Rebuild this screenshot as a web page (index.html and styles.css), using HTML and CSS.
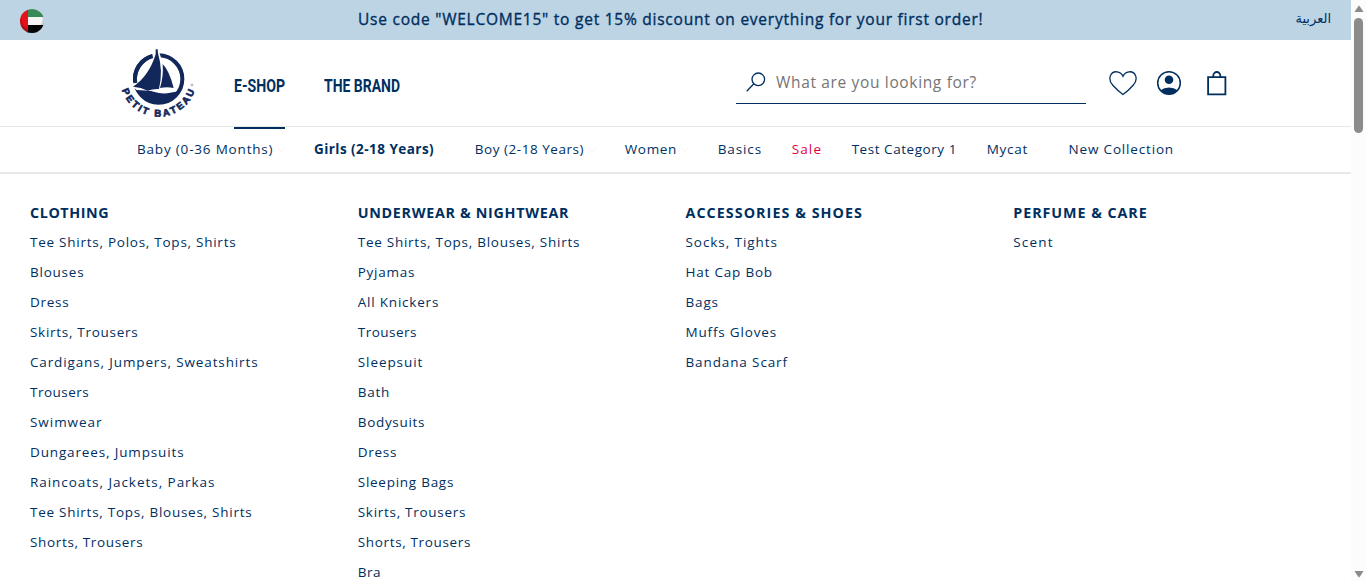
FILE: index.html
```html
<!DOCTYPE html>
<html lang="en">
<head>
<meta charset="utf-8">
<title>Petit Bateau</title>
<link rel="stylesheet" href="styles.css">
</head>
<body>
<div class="page">
  <div class="promo">
    <svg class="flag" viewBox="0 0 24 24">
      <defs>
        <clipPath id="disc"><circle cx="12" cy="12" r="12"/></clipPath>
        <radialGradient id="shade" cx=".5" cy=".4" r=".62"><stop offset=".65" stop-color="#000" stop-opacity="0"/><stop offset="1" stop-color="#000" stop-opacity=".45"/></radialGradient>
      </defs>
      <g clip-path="url(#disc)"><path fill="#f5f5f8" d="M0 0h24v24H0z"/><path fill="#388a57" d="M7 0h17v8H7z"/><path fill="#050505" d="M7 16h17v8H7z"/><path fill="#e51218" d="M0 0h8v24H0z"/><path fill="url(#shade)" d="M0 0h24v24H0z"/></g>
    </svg>
    <span class="promo-text" data-w="625">Use code "WELCOME15" to get 15% discount on everything for your first order!</span>
    <span class="lang" lang="ar" dir="rtl">العربية</span>
  </div>
  <header class="header">
    <svg class="logo" viewBox="0 0 300 258">
      <circle cx="146" cy="114" r="71" fill="#fff" stroke="#12275a" stroke-width="12"/>
      <path fill="#12275a" d="M78 148Q108 142 134 153Q164 164 211 148Q193 184 146 184Q99 184 78 148z"/>
      <path fill="#fff" d="M64 134L130 35h18l12 35 41 76-45 8-38-5-38-2z" />
      <path fill="#12275a" d="M137 25h6l1 12q16 53 3 107-18-1-34 5-20-10-44-12Q116 107 137 40zM158 69Q178 89 191 141q-20-4-41 0Q161 106 158 69z"/>
      <path fill="none" stroke="#12275a" stroke-width="12" d="M76 126A71 71 0 0 1 128 45"/>
      <path id="arc" fill="none" d="M36 147A115 115 0 0 0 255 147"/>
      <text class="logo-text"><textPath href="#arc" textLength="286" lengthAdjust="spacing">PETIT BATEAU</textPath></text>
      <circle cx="246" cy="132" r="3" fill="none" stroke="#12275a"/>
    </svg>
    <nav class="main-nav">
      <a class="main-link active"><span class="eshop">E-SHOP</span></a>
      <a class="main-link"><span class="brand">THE BRAND</span></a>
    </nav>
    <div class="search">
      <svg class="search-icon" viewBox="0 0 20 20"><circle cx="12.3" cy="7.3" r="6.3"/><path d="M7.8 11.8L.7 19.2"/></svg>
      <span class="placeholder" data-w="200.5">What are you looking for?</span>
    </div>
    <div class="tools">
      <svg class="heart" viewBox="0 0 28 25"><path d="M14 23.6Q8.5 19.5 3.8 14.3C1 11.2.4 8.2 1.2 5.4 2.4 1.5 5.8.6 8 .8c3 .3 5 2 6 4.4 1-2.4 3-4.1 6-4.4 2.2-.2 5.6.7 6.8 4.6.8 2.8.2 5.8-2.6 8.900Q19.500 19.500 14 23.600z"/></svg>
      <svg class="user" viewBox="0 0 26 26"><circle cx="13" cy="13" r="11.3" fill="none" stroke="#002f5f" stroke-width="1.5"/><circle cx="13" cy="9.800" r="4.300"/><path d="M4.500 20.300Q8 17.400 13 17.400T21.500 20.300Q18 24.300 13 24.300T4.500 20.300z"/></svg>
      <svg class="bag" viewBox="0 0 20 25"><path d="M1.100 6.100h17.300v17.300H1.100zM6.300 6V4.500a3.500 3.500 0 0 1 7 0V6"/></svg>
    </div>
  </header>
  <nav class="categories">
    <a class="more"><span data-w="136">Baby (0-36 Months)</span></a>
    <a class="more current"><span data-w="120">Girls (2-18 Years)</span></a>
    <a class="more"><span data-w="109">Boy (2-18 Years)</span></a>
    <a class="more"><span data-w="52">Women</span></a>
    <a><span data-w="44">Basics</span></a>
    <a class="sale"><span data-w="30">Sale</span></a>
    <a><span data-w="105">Test Category 1</span></a>
    <a class="more"><span data-w="41">Mycat</span></a>
    <a><span data-w="105">New Collection</span></a>
  </nav>
  <main class="mega">
    <section><h2><span data-w="79">CLOTHING</span></h2><ul>
      <li><span data-w="206">Tee Shirts, Polos, Tops, Shirts</span></li><li><span data-w="54">Blouses</span></li><li><span data-w="39">Dress</span></li><li><span data-w="108">Skirts, Trousers</span></li><li><span data-w="228">Cardigans, Jumpers, Sweatshirts</span></li><li><span data-w="59">Trousers</span></li><li><span data-w="72">Swimwear</span></li><li><span data-w="154">Dungarees, Jumpsuits</span></li><li><span data-w="185">Raincoats, Jackets, Parkas</span></li><li><span data-w="222">Tee Shirts, Tops, Blouses, Shirts</span></li><li><span data-w="113">Shorts, Trousers</span></li></ul></section>
    <section><h2><span data-w="211">UNDERWEAR &amp; NIGHTWEAR</span></h2><ul>
      <li><span data-w="222">Tee Shirts, Tops, Blouses, Shirts</span></li><li><span data-w="57">Pyjamas</span></li><li><span data-w="81">All Knickers</span></li><li><span data-w="59">Trousers</span></li><li><span data-w="65">Sleepsuit</span></li><li><span data-w="32">Bath</span></li><li><span data-w="67">Bodysuits</span></li><li><span data-w="39">Dress</span></li><li><span data-w="96">Sleeping Bags</span></li><li><span data-w="108">Skirts, Trousers</span></li><li><span data-w="113">Shorts, Trousers</span></li><li><span data-w="23">Bra</span></li></ul></section>
    <section><h2><span data-w="177">ACCESSORIES &amp; SHOES</span></h2><ul>
      <li><span data-w="92">Socks, Tights</span></li><li><span data-w="87">Hat Cap Bob</span></li><li><span data-w="33">Bags</span></li><li><span data-w="91">Muffs Gloves</span></li><li><span data-w="102">Bandana Scarf</span></li></ul></section>
    <section><h2><span data-w="134">PERFUME &amp; CARE</span></h2><ul>
      <li><span data-w="40">Scent</span></li></ul></section>
  </main>
</div>
<div class="scrollbar">
  <svg viewBox="0 0 10 8"><path d="M5 .5Q5.500 .5 9.500 7H.5Q4.500 .5 5 .5z"/></svg>
  <div class="thumb"></div>
  <svg class="down" viewBox="0 0 10 8"><path d="M.5 1h9Q5.500 7.500 5 7.500T.5 1z"/></svg>
</div>
<script src="script.js"></script>
</body>
</html>
```

FILE: styles.css
```css
* { box-sizing: border-box; }
body { margin: 0; height: 581px; overflow: hidden; display: flex; background: #fff; color: #002f5f; font: 13.500px/30px "Open Sans", "Noto Sans", sans-serif; }
.page { width: 1351px; height: 581px; overflow: hidden; }
[data-w] { display: inline-block; white-space: nowrap; }
.promo { height: 40px; background: #bdd4e4; display: grid; grid-template-columns: 338px 675px 1fr; align-items: center; padding: 0 20px; }
.flag { width: 24px; height: 24px; margin-top: 2px; }
.promo-text { justify-self: start; font-size: 15.500px; -webkit-text-stroke: 0.35px #002f5f; line-height: 39px; height: 40px; }
.lang { justify-self: end; font: 13px/38px "Liberation Serif", "DejaVu Sans", serif; height: 40px; }
.header { height: 87px; border-bottom: 1px solid #e8e8e8; display: flex; }
.logo { width: 100px; height: 86px; margin-left: 110px; margin-top: 1px; overflow: visible; }
.logo-text { font: bold 29px "Liberation Sans", sans-serif; fill: #12275a; stroke: #12275a; stroke-width: 2px; }
.main-nav { display: flex; gap: 39px; margin-left: 24px; width: 502px; }
.main-link { height: 89px; font: bold 18px/92px Roboto, sans-serif; }
.main-link span { display: block; transform-origin: left; white-space: nowrap; }
.main-link:first-child { width: 51px; }
.active { border-bottom: 2px solid #002f5f; }
.search { width: 350px; height: 64px; border-bottom: 1px solid #002f5f; display: flex; padding-left: 10px; padding-top: 21px; line-height: 43px; }
.search-icon { width: 20px; height: 20px; margin-top: 11px; fill: none; stroke: #002f5f; stroke-width: 1.3; }
.placeholder { margin-left: 10px; font-size: 15.500px; color: #757575; }
.tools { display: flex; padding-left: 23px; padding-top: 30px; }
.heart { width: 28px; height: 25px; margin-top: 1px; fill: none; stroke: #002f5f; stroke-width: 1.3; }
.user { width: 26px; height: 26px; margin-left: 19px; fill: #002f5f; }
.bag { width: 20px; height: 25px; margin-left: 25px; margin-top: 1px; fill: none; stroke: #002f5f; stroke-width: 1.8; }
.categories { height: 47px; display: flex; align-items: center; gap: 30px; padding-left: 137px; border-bottom: 2px solid #e8e8e8; line-height: 45px; }
.more { display: flex; align-items: center; }
.more::after { content: ""; width: 5px; height: 5px; margin: -3px 0 0 5.500px; border: solid #fff3f3; border-width: 0 1px 1px 0; transform: rotate(45deg); }
.sale { color: #e4003a; }
.current { font-weight: bold; }
.mega { display: grid; grid-template-columns: repeat(4, 327.750px); padding: 24px 0 0 30px; }
h2 { margin: 0; font-size: 14.300px; font-weight: bold; line-height: 30px; height: 29px; }
ul { list-style: none; margin: 0; padding: 0; }
li { height: 30px; }
.scrollbar { width: 15px; height: 581px; background: #fcfcfc; display: flex; flex-direction: column; align-items: center; padding: 5px 0 3px; }
.scrollbar svg { width: 10px; height: 8px; fill: #8b8b8b; }
.thumb { width: 9px; height: 115px; margin-top: 5px; border-radius: 5px; background: #8b8b8b; }
.down { margin-top: auto; }
```

FILE: script.js
```js
document.querySelectorAll('[data-w]').forEach(function (el) {
  var target = Number(el.dataset.w);
  var count = el.textContent.length;
  var natural = el.getBoundingClientRect().width;
  el.style.letterSpacing = (target - natural) / (count - 0.5) + 'px';
  el.style.width = target + 'px';
  el.style.marginRight = el.closest('.more') ? '-0.6px' : '0';
});
// Condense the main navigation labels.
[['.eshop', 51], ['.brand', 76]].forEach(function (item) {
  var el = document.querySelector(item[0]);
  el.style.display = 'inline-block';
  var natural = el.getBoundingClientRect().width;
  el.style.transform = 'scaleX(' + item[1] / natural + ')';
});
```
